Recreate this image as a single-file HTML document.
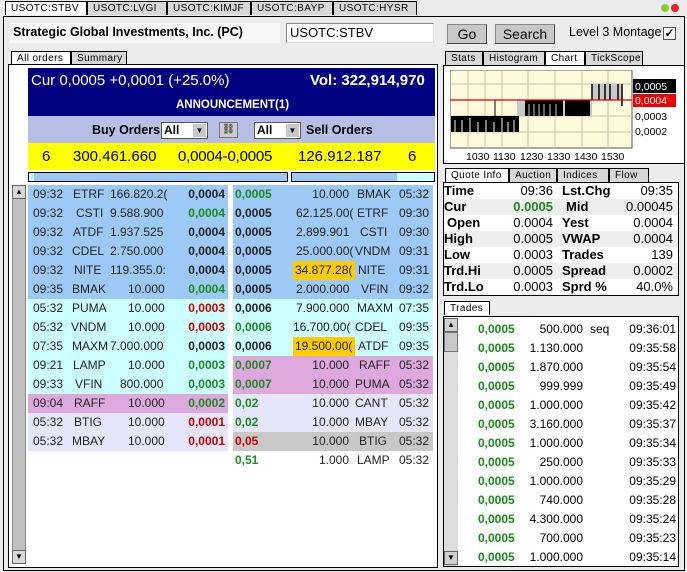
<!DOCTYPE html>
<html><head><meta charset="utf-8"><style>
*{box-sizing:border-box;margin:0;padding:0}
body{width:687px;height:572px;background:#ececec;font-family:"Liberation Sans",Arial,sans-serif;font-size:12px;position:relative;overflow:hidden;color:#000}
.a{position:absolute;white-space:nowrap}
.tab{position:absolute;height:14px;border:1px solid #000;border-bottom:none;background:#d8d8d8;font-size:10px;letter-spacing:.4px;padding:0 0 0 5px;line-height:13px;white-space:nowrap;overflow:hidden}
.tab.on{background:#fff}
.box{position:absolute;border:1px solid #000;background:#fff}
.row{position:absolute;height:19px;line-height:19px;font-size:12px;color:#222}
.row span{position:absolute}
.b{font-weight:bold}
.g{color:#1a8a1a}.r{color:#cc0000}
.btn{position:absolute;background:#c8c8c8;border:1px solid #888;border-right-color:#444;border-bottom-color:#444;text-align:center;font-size:14px;line-height:18px}
.q{position:absolute;left:444px;width:234px;height:16px;line-height:16px;font-size:13px}
.q span{position:absolute}
.t{position:absolute;left:458px;width:220px;height:19px;line-height:19px;font-size:12px}
.t span{position:absolute}
</style></head><body>
<div class="tab on" style="left:5px;top:1px;width:82px">USOTC:STBV</div>
<div class="tab" style="left:87px;top:1px;width:80px">USOTC:LVGI</div>
<div class="tab" style="left:167px;top:1px;width:84px">USOTC:KIMJF</div>
<div class="tab" style="left:251px;top:1px;width:82px">USOTC:BAYP</div>
<div class="tab" style="left:333px;top:1px;width:84px">USOTC:HYSR</div>
<div class="a" style="left:661px;top:4px;width:8px;height:8px;border-radius:50%;background:#8c3"></div>
<div class="a" style="left:671px;top:4px;width:8px;height:8px;border-radius:50%;background:#e22"></div>
<div class="a" style="left:3px;top:16px;width:682px;height:555px;border:1px solid #000;background:#ececec"></div>
<div class="a" style="left:10px;top:23px;width:270px;height:20px;background:#f8f8f8"></div>
<div class="a b" style="left:13px;top:25px;font-size:12.5px">Strategic Global Investments, Inc. (PC)</div>
<div class="a" style="left:286px;top:23px;width:148px;height:20px;background:#fff;border:1px solid #888;border-right-color:#ddd;border-bottom-color:#ddd;font-size:13px;padding-left:3px;line-height:18px">USOTC:STBV</div>
<div class="btn" style="left:447px;top:24px;width:40px;height:20px">Go</div>
<div class="btn" style="left:495px;top:24px;width:60px;height:20px">Search</div>
<div class="a" style="left:569px;top:25px;font-size:12.5px">Level 3 Montage</div>
<div class="a" style="left:663px;top:27px;width:13px;height:13px;border:1px solid #555;background:#fff;font-size:12px;line-height:11px;text-align:center;font-weight:bold">✓</div>
<div class="tab on" style="left:11px;top:51px;width:60px">All orders</div>
<div class="tab" style="left:71px;top:51px;width:56px">Summary</div>
<div class="box" style="left:8px;top:64px;width:430px;height:504px"></div>
<div class="a" style="left:28px;top:68px;width:407px;height:48px;background:#000080"></div>
<div class="a" style="left:31px;top:72px;color:#fff;font-size:15px">Cur 0,0005 +0,0001 (+25.0%)</div>
<div class="a b" style="left:310px;top:72px;color:#fff;font-size:15px">Vol: 322,914,970</div>
<div class="a b" style="left:176px;top:99px;color:#fff;font-size:11.5px">ANNOUNCEMENT(1)</div>
<div class="a" style="left:28px;top:116px;width:407px;height:27px;background:#b8bfe6"></div>
<div class="a b" style="left:92px;top:123px;font-size:12.5px">Buy Orders</div>
<div class="a" style="left:161px;top:122px;width:47px;height:17px;background:#fff;border:1px solid #555"><b style="position:absolute;left:2px;top:0;font-size:12px">All</b><div style="position:absolute;right:1px;top:1px;width:13px;height:13px;background:#c8c8c8;font-size:8px;text-align:center;line-height:13px">▼</div></div>
<div class="a" style="left:219px;top:122px;width:19px;height:16px;background:#ccc;border:1px solid #777;font-size:10px;text-align:center;line-height:14px">⛓</div>
<div class="a" style="left:254px;top:122px;width:47px;height:17px;background:#fff;border:1px solid #555"><b style="position:absolute;left:2px;top:0;font-size:12px">All</b><div style="position:absolute;right:1px;top:1px;width:13px;height:13px;background:#c8c8c8;font-size:8px;text-align:center;line-height:13px">▼</div></div>
<div class="a b" style="left:306px;top:123px;font-size:12.5px">Sell Orders</div>
<div class="a" style="left:28px;top:143px;width:407px;height:27px;background:#ffff00"></div>
<div class="a" style="left:42px;top:148px;font-size:15px">6</div>
<div class="a" style="left:73px;top:148px;font-size:15px">300.461.660</div>
<div class="a" style="left:178px;top:148px;font-size:15px;letter-spacing:-.2px">0,0004-0,0005</div>
<div class="a" style="left:298px;top:148px;font-size:15px">126.912.187</div>
<div class="a" style="left:408px;top:148px;font-size:15px">6</div>
<div class="a" style="left:28px;top:172px;width:260px;height:10px;border:1px solid #000;background:#9cc9f5"><div style="width:5px;height:8px;background:#ccffff"></div></div>
<div class="a" style="left:291px;top:172px;width:144px;height:10px;border:1px solid #000;background:linear-gradient(90deg,#9cc9f5 74%,#ccffff 74%)"></div>
<div class="a" style="left:12px;top:185px;width:14px;height:379px;background:#c0c0c0;border:1px solid #888"></div>
<div class="a" style="left:12px;top:185px;width:14px;height:14px;background:#d8d8d8;border:1px solid #666;font-size:8px;text-align:center;line-height:12px">▲</div>
<div class="a" style="left:12px;top:550px;width:14px;height:14px;background:#d8d8d8;border:1px solid #666;font-size:8px;text-align:center;line-height:12px">▼</div>
<div class="row" style="left:28px;top:185px;width:200px;background:#9cc9f5"><span style="left:5px">09:32</span><span style="left:45px">ETRF</span><span style="left:82px">166.820.2(</span><span class="b" style="right:3px">0,0004</span></div>
<div class="row" style="left:28px;top:204px;width:200px;background:#9cc9f5"><span style="left:5px">09:32</span><span style="left:48px">CSTI</span><span style="left:82px">9.588.900</span><span class="b g" style="right:3px">0,0004</span></div>
<div class="row" style="left:28px;top:223px;width:200px;background:#9cc9f5"><span style="left:5px">09:32</span><span style="left:45px">ATDF</span><span style="left:82px">1.937.525</span><span class="b" style="right:3px">0,0004</span></div>
<div class="row" style="left:28px;top:242px;width:200px;background:#9cc9f5"><span style="left:5px">09:32</span><span style="left:44px">CDEL</span><span style="left:82px">2.750.000</span><span class="b" style="right:3px">0,0004</span></div>
<div class="row" style="left:28px;top:261px;width:200px;background:#9cc9f5"><span style="left:5px">09:32</span><span style="left:46px">NITE</span><span style="left:82px">119.355.0:</span><span class="b" style="right:3px">0,0004</span></div>
<div class="row" style="left:28px;top:280px;width:200px;background:#9cc9f5"><span style="left:5px">09:35</span><span style="left:44px">BMAK</span><span style="left:100px">10.000</span><span class="b g" style="right:3px">0,0004</span></div>
<div class="row" style="left:28px;top:299px;width:200px;background:#ccffff"><span style="left:5px">05:32</span><span style="left:44px">PUMA</span><span style="left:100px">10.000</span><span class="b r" style="right:3px">0,0003</span></div>
<div class="row" style="left:28px;top:318px;width:200px;background:#ccffff"><span style="left:5px">05:32</span><span style="left:43px">VNDM</span><span style="left:100px">10.000</span><span class="b r" style="right:3px">0,0003</span></div>
<div class="row" style="left:28px;top:337px;width:200px;background:#ccffff"><span style="left:5px">07:35</span><span style="left:44px">MAXM</span><span style="left:82px">7.000.000</span><span class="b" style="right:3px">0,0003</span></div>
<div class="row" style="left:28px;top:356px;width:200px;background:#ccffff"><span style="left:5px">09:21</span><span style="left:45px">LAMP</span><span style="left:100px">10.000</span><span class="b g" style="right:3px">0,0003</span></div>
<div class="row" style="left:28px;top:375px;width:200px;background:#ccffff"><span style="left:5px">09:33</span><span style="left:47px">VFIN</span><span style="left:92px">800.000</span><span class="b g" style="right:3px">0,0003</span></div>
<div class="row" style="left:28px;top:394px;width:200px;background:#dda8dd"><span style="left:5px">09:04</span><span style="left:46px">RAFF</span><span style="left:100px">10.000</span><span class="b g" style="right:3px">0,0002</span></div>
<div class="row" style="left:28px;top:413px;width:200px;background:#e6e6fa"><span style="left:5px">05:32</span><span style="left:46px">BTIG</span><span style="left:100px">10.000</span><span class="b r" style="right:3px">0,0001</span></div>
<div class="row" style="left:28px;top:432px;width:200px;background:#e6e6fa"><span style="left:5px">05:32</span><span style="left:44px">MBAY</span><span style="left:100px">10.000</span><span class="b r" style="right:3px">0,0001</span></div>
<div class="row" style="left:233px;top:185px;width:200px;background:#9cc9f5"><span class="b g" style="left:2px">0,0005</span><span style="right:84px">10.000</span><span style="left:124px">BMAK</span><span style="right:4px">05:32</span></div>
<div class="row" style="left:233px;top:204px;width:200px;background:#9cc9f5"><span class="b" style="left:2px">0,0005</span><span style="left:63px">62.125.00(</span><span style="left:124px">ETRF</span><span style="right:4px">09:30</span></div>
<div class="row" style="left:233px;top:223px;width:200px;background:#9cc9f5"><span class="b" style="left:2px">0,0005</span><span style="left:63px">2.899.901</span><span style="left:127px">CSTI</span><span style="right:4px">09:30</span></div>
<div class="row" style="left:233px;top:242px;width:200px;background:#9cc9f5"><span class="b" style="left:2px">0,0005</span><span style="left:63px">25.000.00(</span><span style="left:122px">VNDM</span><span style="right:4px">09:31</span></div>
<div class="row" style="left:233px;top:261px;width:200px;background:#9cc9f5"><span class="b" style="left:2px">0,0005</span><span style="left:60px;width:62px;background:#ffcc00;padding-left:2px;overflow:hidden">34.877.28(</span><span style="left:125px">NITE</span><span style="right:4px">09:31</span></div>
<div class="row" style="left:233px;top:280px;width:200px;background:#9cc9f5"><span class="b" style="left:2px">0,0005</span><span style="left:63px">2.000.000</span><span style="left:128px">VFIN</span><span style="right:4px">09:32</span></div>
<div class="row" style="left:233px;top:299px;width:200px;background:#ccffff"><span class="b" style="left:2px">0,0006</span><span style="left:63px">7.900.000</span><span style="left:124px">MAXM</span><span style="right:4px">07:35</span></div>
<div class="row" style="left:233px;top:318px;width:200px;background:#ccffff"><span class="b g" style="left:2px">0,0006</span><span style="left:60px">16.700.00(</span><span style="left:122px">CDEL</span><span style="right:4px">09:35</span></div>
<div class="row" style="left:233px;top:337px;width:200px;background:#ccffff"><span class="b" style="left:2px">0,0006</span><span style="left:60px;width:62px;background:#ffcc00;padding-left:2px;overflow:hidden">19.500.00(</span><span style="left:125px">ATDF</span><span style="right:4px">09:35</span></div>
<div class="row" style="left:233px;top:356px;width:200px;background:#dda8dd"><span class="b g" style="left:2px">0,0007</span><span style="right:84px">10.000</span><span style="left:126px">RAFF</span><span style="right:4px">05:32</span></div>
<div class="row" style="left:233px;top:375px;width:200px;background:#dda8dd"><span class="b g" style="left:2px">0,0007</span><span style="right:84px">10.000</span><span style="left:122px">PUMA</span><span style="right:4px">05:32</span></div>
<div class="row" style="left:233px;top:394px;width:200px;background:#e6e6fa"><span class="b g" style="left:2px">0,02</span><span style="right:84px">10.000</span><span style="left:122px">CANT</span><span style="right:4px">05:32</span></div>
<div class="row" style="left:233px;top:413px;width:200px;background:#e6e6fa"><span class="b g" style="left:2px">0,02</span><span style="right:84px">10.000</span><span style="left:122px">MBAY</span><span style="right:4px">05:32</span></div>
<div class="row" style="left:233px;top:432px;width:200px;background:#c8c8c8"><span class="b r" style="left:2px">0,05</span><span style="right:84px">10.000</span><span style="left:126px">BTIG</span><span style="right:4px">05:32</span></div>
<div class="row" style="left:233px;top:451px;width:200px"><span class="b g" style="left:2px">0,51</span><span style="right:84px">1.000</span><span style="left:124px">LAMP</span><span style="right:4px">05:32</span></div>
<div class="tab" style="left:445px;top:51px;width:38px">Stats</div>
<div class="tab" style="left:483px;top:51px;width:62px">Histogram</div>
<div class="tab on" style="left:545px;top:51px;width:40px">Chart</div>
<div class="tab" style="left:585px;top:51px;width:58px">TickScope</div>
<div class="box" style="left:443px;top:65px;width:242px;height:99px"></div>
<svg class="a" style="left:450px;top:70px" width="232" height="92">
<rect x="0" y="0" width="182" height="78" fill="#fffadc" stroke="#555"/>
<g stroke="#c8c0a0" stroke-width="1">
<line x1="18" y1="0" x2="18" y2="78"/><line x1="35" y1="0" x2="35" y2="78"/><line x1="52" y1="0" x2="52" y2="78"/><line x1="78" y1="0" x2="78" y2="78"/><line x1="105" y1="0" x2="105" y2="78"/><line x1="132" y1="0" x2="132" y2="78"/><line x1="158" y1="0" x2="158" y2="78"/>
<line x1="0" y1="14" x2="182" y2="14"/><line x1="0" y1="46" x2="182" y2="46"/><line x1="0" y1="62" x2="182" y2="62"/></g>
<rect x="1" y="46" width="68" height="16" fill="#000"/>
<g stroke="#fffadc" stroke-width="1"><line x1="5" y1="50" x2="5" y2="62"/><line x1="12" y1="50" x2="12" y2="62"/><line x1="20" y1="48" x2="20" y2="62"/><line x1="28" y1="52" x2="28" y2="62"/><line x1="36" y1="50" x2="36" y2="62"/><line x1="44" y1="52" x2="44" y2="62"/><line x1="52" y1="48" x2="52" y2="62"/><line x1="58" y1="52" x2="58" y2="62"/><line x1="64" y1="50" x2="64" y2="62"/></g>
<line x1="45" y1="30" x2="45" y2="46" stroke="#000"/>
<rect x="67" y="30" width="75" height="16" fill="#c8c8c8"/>
<rect x="75" y="30" width="38" height="16" fill="#000"/>
<g stroke="#c8c8c8" stroke-width="1"><line x1="79" y1="34" x2="79" y2="46"/><line x1="84" y1="34" x2="84" y2="46"/><line x1="89" y1="34" x2="89" y2="46"/><line x1="94" y1="34" x2="94" y2="46"/><line x1="100" y1="34" x2="100" y2="46"/><line x1="106" y1="34" x2="106" y2="46"/></g>
<rect x="115" y="30" width="16" height="16" fill="#000"/>
<rect x="130" y="30" width="10" height="16" fill="#000"/>
<rect x="142" y="14" width="30" height="16" fill="#c8c8c8"/>
<g stroke="#000" stroke-width="1.5"><line x1="142" y1="14" x2="142" y2="30"/><line x1="149" y1="14" x2="149" y2="30"/><line x1="155" y1="14" x2="155" y2="30"/><line x1="160" y1="14" x2="160" y2="30"/><line x1="168" y1="14" x2="168" y2="30"/><line x1="172" y1="14" x2="172" y2="36"/></g>
<line x1="0" y1="30" x2="182" y2="30" stroke="#d00" stroke-width="1.2"/>
<rect x="183" y="9" width="43" height="14" fill="#000"/><text x="185" y="20" fill="#fff" font-size="10.5" font-family="Liberation Sans">0,0005</text>
<rect x="183" y="24" width="43" height="13" fill="#e00"/><text x="185" y="34" fill="#fff" font-size="10.5" font-family="Liberation Sans">0,0004</text>
<text x="185" y="50" font-size="10.5" font-family="Liberation Sans">0,0003</text>
<text x="185" y="65" font-size="10.5" font-family="Liberation Sans">0,0002</text>
<g font-size="10.5" font-family="Liberation Sans"><text x="16" y="90">1030</text><text x="43" y="90">1130</text><text x="70" y="90">1230</text><text x="97" y="90">1330</text><text x="124" y="90">1430</text><text x="151" y="90">1530</text></g>
</svg>
<div class="tab on" style="left:445px;top:168px;width:64px">Quote Info</div>
<div class="tab" style="left:509px;top:168px;width:48px">Auction</div>
<div class="tab" style="left:557px;top:168px;width:52px">Indices</div>
<div class="tab" style="left:609px;top:168px;width:40px">Flow</div>
<div class="box" style="left:443px;top:182px;width:236px;height:114px"></div>
<div class="q" style="top:183px"><span class="b" style="left:0">Time</span><span style="right:125px">09:36</span><span class="b" style="left:118px">Lst.Chg</span><span style="right:5px">09:35</span></div>
<div class="q" style="top:199px;background:#eee"><span class="b" style="left:0">Cur</span><span class="b g" style="right:125px">0.0005</span><span class="b" style="left:122px">Mid</span><span style="right:5px">0.00045</span></div>
<div class="q" style="top:215px"><span class="b" style="left:3px">Open</span><span style="right:125px">0.0004</span><span class="b" style="left:118px">Yest</span><span style="right:5px">0.0004</span></div>
<div class="q" style="top:231px;background:#eee"><span class="b" style="left:0">High</span><span style="right:125px">0.0005</span><span class="b" style="left:118px">VWAP</span><span style="right:5px">0.0004</span></div>
<div class="q" style="top:247px"><span class="b" style="left:0">Low</span><span style="right:125px">0.0003</span><span class="b" style="left:118px">Trades</span><span style="right:5px">139</span></div>
<div class="q" style="top:263px;background:#eee"><span class="b" style="left:0">Trd.Hi</span><span style="right:125px">0.0005</span><span class="b" style="left:118px">Spread</span><span style="right:5px">0.0002</span></div>
<div class="q" style="top:279px"><span class="b" style="left:0">Trd.Lo</span><span style="right:125px">0.0003</span><span class="b" style="left:118px">Sprd %</span><span style="right:5px">40.0%</span></div>
<div class="tab on" style="left:444px;top:301px;width:46px">Trades</div>
<div class="box" style="left:443px;top:316px;width:236px;height:251px"></div>
<div class="a" style="left:444px;top:318px;width:14px;height:248px;background:#dcdcdc"></div>
<div class="a" style="left:444px;top:318px;width:14px;height:14px;background:#d0d0d0;border:1px solid #666;font-size:8px;text-align:center;line-height:12px">▲</div>
<div class="a" style="left:444px;top:332px;width:14px;height:20px;background:#c8c8c8;border:1px solid #777"></div>
<div class="a" style="left:444px;top:551px;width:14px;height:14px;background:#d0d0d0;border:1px solid #666;font-size:8px;text-align:center;line-height:12px">▼</div>
<div class="t" style="top:320px"><span class="b g" style="left:20px">0,0005</span><span style="right:95px">500.000</span><span style="left:132px">seq</span><span style="right:2px">09:36:01</span></div>
<div class="t" style="top:339px"><span class="b g" style="left:20px">0,0005</span><span style="right:95px">1.130.000</span><span style="right:2px">09:35:58</span></div>
<div class="t" style="top:358px"><span class="b g" style="left:20px">0,0005</span><span style="right:95px">1.870.000</span><span style="right:2px">09:35:54</span></div>
<div class="t" style="top:377px"><span class="b g" style="left:20px">0,0005</span><span style="right:95px">999.999</span><span style="right:2px">09:35:49</span></div>
<div class="t" style="top:396px"><span class="b g" style="left:20px">0,0005</span><span style="right:95px">1.000.000</span><span style="right:2px">09:35:42</span></div>
<div class="t" style="top:415px"><span class="b g" style="left:20px">0,0005</span><span style="right:95px">3.160.000</span><span style="right:2px">09:35:37</span></div>
<div class="t" style="top:434px"><span class="b g" style="left:20px">0,0005</span><span style="right:95px">1.000.000</span><span style="right:2px">09:35:34</span></div>
<div class="t" style="top:453px"><span class="b g" style="left:20px">0,0005</span><span style="right:95px">250.000</span><span style="right:2px">09:35:33</span></div>
<div class="t" style="top:472px"><span class="b g" style="left:20px">0,0005</span><span style="right:95px">1.000.000</span><span style="right:2px">09:35:29</span></div>
<div class="t" style="top:491px"><span class="b g" style="left:20px">0,0005</span><span style="right:95px">740.000</span><span style="right:2px">09:35:28</span></div>
<div class="t" style="top:510px"><span class="b g" style="left:20px">0,0005</span><span style="right:95px">4.300.000</span><span style="right:2px">09:35:24</span></div>
<div class="t" style="top:529px"><span class="b g" style="left:20px">0,0005</span><span style="right:95px">700.000</span><span style="right:2px">09:35:23</span></div>
<div class="t" style="top:548px"><span class="b g" style="left:20px">0,0005</span><span style="right:95px">1.000.000</span><span style="right:2px">09:35:14</span></div>
</body></html>
